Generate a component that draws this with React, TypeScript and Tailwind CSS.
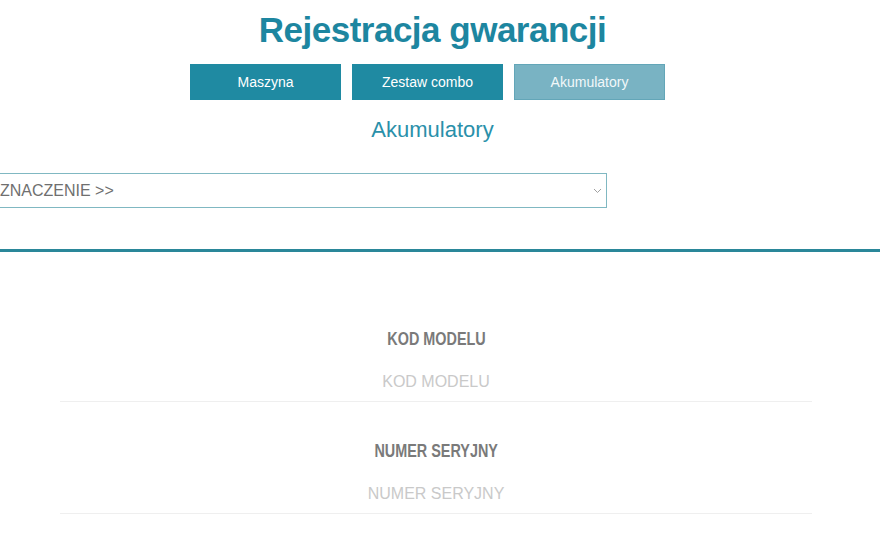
import { useState } from 'react'

const tabs = ['Maszyna', 'Zestaw combo', 'Akumulatory']

export default function App() {
    const [active, setActive] = useState('Akumulatory')
    const [kod, setKod] = useState('')
    const [numer, setNumer] = useState('')

    return (
        <div className="w-[880px] h-[540px] overflow-hidden bg-white font-['Liberation_Sans',Arial,sans-serif]">
            {/* Header */}
            <div className="w-[865px] flex flex-col items-center">
                <h1 className="mt-[12px] h-[35px] text-[35px] leading-[35px] font-bold tracking-[-0.5px] text-[#1d86a0]">
                    Rejestracja gwarancji
                </h1>
                <div className="mt-[17px] mr-[10px] flex gap-[11px]">
                    {tabs.map((t) => (
                        <button
                            key={t}
                            onClick={() => setActive(t)}
                            className={
                                t === active
                                    ? 'w-[151px] h-[36px] text-[14px] text-[#f2f8fa] bg-[#79b3c3] border border-[#63a6b8]'
                                    : 'w-[151px] h-[36px] text-[14px] text-white bg-[#1f8aa2] border border-[#1f8aa2]'
                            }
                        >
                            {t}
                        </button>
                    ))}
                </div>
                <div className="mt-[19px] h-[22px] text-[22px] leading-[22px] text-[#2a90aa]">{active}</div>
            </div>

            {/* Select */}
            <div className="mt-[32px] w-[607px] h-[35px] flex items-center justify-between border border-l-0 border-[#80b8c2] pr-[4px]">
                <span className="text-[16px] text-[#6f6f6f]">ZNACZENIE &gt;&gt;</span>
                <svg width="9" height="6" viewBox="0 0 9 6" fill="none">
                    <path d="M1 1l3.5 3.5L8 1" stroke="#a0a0a0" strokeWidth="1" />
                </svg>
            </div>

            <div className="mt-[41px] h-[3px] bg-[#2a8799]" />

            {/* Fields */}
            <div className="ml-[60px] w-[752px] flex flex-col">
                <div className="mt-[78px] h-[18px] flex justify-center">
                    <span className="inline-block scale-x-[0.8] text-[18px] leading-[18px] font-bold text-[#7a7a7a] whitespace-nowrap">
                        KOD MODELU
                    </span>
                </div>
                <input
                    value={kod}
                    onChange={(e) => setKod(e.target.value)}
                    placeholder="KOD MODELU"
                    className="mt-[23px] h-[31px] pb-[9px] text-center text-[16px] text-[#555] placeholder:text-[#c9c9c9] border-b border-[#efefef] outline-none"
                />

                <div className="mt-[40px] h-[18px] flex justify-center">
                    <span className="inline-block scale-x-[0.8] text-[18px] leading-[18px] font-bold text-[#7a7a7a] whitespace-nowrap">
                        NUMER SERYJNY
                    </span>
                </div>
                <input
                    value={numer}
                    onChange={(e) => setNumer(e.target.value)}
                    placeholder="NUMER SERYJNY"
                    className="mt-[23px] h-[31px] pb-[9px] text-center text-[16px] text-[#555] placeholder:text-[#c9c9c9] border-b border-[#efefef] outline-none"
                />
            </div>
        </div>
    )
}
